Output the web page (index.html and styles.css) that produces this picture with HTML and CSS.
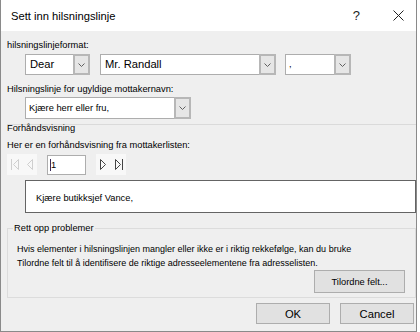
FILE: index.html
```html
<!DOCTYPE html>
<html lang="nb">
<head>
  <meta charset="UTF-8" />
  <title>Sett inn hilsningslinje</title>
  <link rel="stylesheet" href="styles.css">
</head>
<body>
  <div class="dialog">
    <div class="titlebar">
      <span class="title">Sett inn hilsningslinje</span>
      <span class="help">?</span>
      <span class="close">
        <svg width="11" height="11" viewBox="0 0 11 11"><path d="M0.5 0.5 L10.5 10.5 M10.5 0.5 L0.5 10.5" stroke="#222" stroke-width="1" fill="none"/></svg>
      </span>
    </div>

    <div class="content">
      <div class="label">hilsningslinjeformat:</div>
      <div class="combo-row">
        <div class="combo big dear">
          <span class="value">Dear</span>
          <span class="drop"><svg width="7" height="4" viewBox="0 0 7 4"><polyline points="0.5,0.5 3.5,3.5 6.5,0.5" fill="none" stroke="#606060"/></svg></span>
        </div>
        <div class="combo big name">
          <span class="value">Mr. Randall</span>
          <span class="drop"><svg width="7" height="4" viewBox="0 0 7 4"><polyline points="0.5,0.5 3.5,3.5 6.5,0.5" fill="none" stroke="#606060"/></svg></span>
        </div>
        <div class="combo punct">
          <span class="value">,</span>
          <span class="drop"><svg width="7" height="4" viewBox="0 0 7 4"><polyline points="0.5,0.5 3.5,3.5 6.5,0.5" fill="none" stroke="#606060"/></svg></span>
        </div>
      </div>

      <div class="label label-2">Hilsningslinje for ugyldige mottakernavn:</div>
      <div class="combo invalid">
        <span class="value">Kjære herr eller fru,</span>
        <span class="drop"><svg width="7" height="4" viewBox="0 0 7 4"><polyline points="0.5,0.5 3.5,3.5 6.5,0.5" fill="none" stroke="#606060"/></svg></span>
      </div>

      <div class="separator">
        <span>Forhåndsvisning</span>
      </div>

      <div class="label label-3">Her er en forhåndsvisning fra mottakerlisten:</div>
      <div class="nav-row">
        <div class="nav-group">
          <span class="nav-btn">
            <svg width="8" height="11" viewBox="0 0 8 11"><path d="M0.5 0 V11" stroke="#cfcfcf"/><polygon points="7.5,0.5 7.5,10.5 2.5,5.5" fill="none" stroke="#cfcfcf"/></svg>
          </span>
          <span class="nav-btn">
            <svg width="7" height="11" viewBox="0 0 7 11"><polygon points="6.5,0.5 6.5,10.5 1.5,5.5" fill="none" stroke="#cfcfcf"/></svg>
          </span>
        </div>
        <div class="record"><span class="caret"></span>1</div>
        <div class="nav-group">
          <span class="nav-btn">
            <svg width="7" height="11" viewBox="0 0 7 11"><polygon points="0.5,0.5 0.5,10.5 5.5,5.5" fill="none" stroke="#444"/></svg>
          </span>
          <span class="nav-btn">
            <svg width="8" height="11" viewBox="0 0 8 11"><polygon points="0.5,0.5 0.5,10.5 5.5,5.5" fill="none" stroke="#444"/><path d="M7.5 0 V11" stroke="#444"/></svg>
          </span>
        </div>
      </div>

      <div class="preview">Kjære butikksjef Vance,</div>

      <div class="group">
        <span class="group-title">Rett opp problemer</span>
        <p class="hint">Hvis elementer i hilsningslinjen mangler eller ikke er i riktig rekkefølge, kan du bruke<br>Tilordne felt til å identifisere de riktige adresseelementene fra adresselisten.</p>
        <div class="group-actions">
          <button class="btn match">Tilordne felt...</button>
        </div>
      </div>

      <div class="buttons">
        <button class="btn">OK</button>
        <button class="btn">Cancel</button>
      </div>
    </div>
  </div>
</body>
</html>
```

FILE: styles.css
```css
body {
  margin: 0;
  background: #fff;
  font-family: "Liberation Sans", Arial, sans-serif;
  color: #000;
}

.dialog {
  width: 417px;
  height: 332px;
  box-sizing: border-box;
  border: 1px solid #8a8a8a;
  border-top: none;
  background: #efefef;
}

.titlebar {
  height: 31px;
  background: #fff;
  display: flex;
  align-items: center;
  padding: 0 12px 0 10px;
}

.title {
  font-size: 11.2px;
}

.help {
  margin-left: auto;
  margin-right: 33px;
  font-size: 13px;
  color: #222;
}

.close {
  display: flex;
}

.content {
  padding: 0 0 0 6px;
}

.label {
  font-size: 9.3px;
  line-height: 14px;
  margin-top: 7px;
}

.label-2 {
  margin-top: 7px;
}

.label-3 {
  margin-top: 4px;
}

.combo-row {
  display: flex;
  margin: 2px 0 0 18px;
}

.combo {
  display: flex;
  height: 21px;
  box-sizing: border-box;
  border: 1px solid #adadad;
  background: #fff;
}

.combo .value {
  flex: 1;
  font-size: 9.3px;
  line-height: 19px;
  padding-left: 3px;
  white-space: nowrap;
  overflow: hidden;
}

.combo.big .value {
  font-size: 11.2px;
  padding-left: 4px;
}

.drop {
  width: 17px;
  margin: -1px -1px -1px 0;
  box-sizing: border-box;
  border: 2px solid #b7b7b7;
  background: #e6e6e6;
  display: flex;
  align-items: center;
  justify-content: center;
}

.dear {
  width: 65px;
}

.name {
  width: 176px;
  margin-left: 10px;
}

.punct {
  width: 66px;
  margin-left: 9px;
}

.invalid {
  width: 166px;
  height: 22px;
  margin: 1px 0 0 18px;
}

.invalid .value {
  line-height: 20px;
}

.separator {
  margin-top: 5px;
  border-top: 1px solid #dadada;
}

.separator span {
  display: block;
  margin-top: -3px;
  font-size: 9.3px;
  line-height: 12px;
}

.nav-row {
  display: flex;
  margin-top: 2px;
  height: 21px;
}

.nav-group {
  display: flex;
  background: #f8f8f8;
  width: 30px;
}

.nav-btn {
  flex: 1;
  display: flex;
  align-items: center;
  justify-content: center;
}

.record {
  width: 39px;
  height: 20px;
  box-sizing: border-box;
  margin: 1px 10px 0 10px;
  border: 1px solid #adadad;
  background: #fff;
  font-size: 9.3px;
  line-height: 18px;
  padding-left: 2px;
  display: flex;
  align-items: center;
}

.caret {
  width: 1px;
  height: 12px;
  background: #3a2a5a;
}

.preview {
  margin: 5px 0 0 18px;
  height: 33px;
  box-sizing: border-box;
  border: 1px solid #646464;
  background: #fff;
  font-size: 9.3px;
  padding: 12px 0 0 10px;
}

.group {
  margin-top: 15px;
  height: 70px;
  box-sizing: border-box;
  border: 1px solid #dcdcdc;
}

.group-title {
  display: block;
  width: max-content;
  margin: -7px 0 0 5px;
  padding: 0 1px;
  background: #efefef;
  font-size: 9.3px;
  line-height: 12px;
}

.hint {
  margin: 8px 0 0 9px;
  font-size: 9px;
  line-height: 14px;
  white-space: nowrap;
}

.group-actions {
  display: flex;
  justify-content: flex-end;
  margin-right: 10px;
}

.btn {
  font-family: inherit;
  font-size: 11.2px;
  height: 21px;
  width: 74px;
  padding: 0;
  border: 1px solid #adadad;
  background: #e1e1e1;
  color: #000;
}

.btn.match {
  width: 91px;
  height: 23px;
  font-size: 9.3px;
}

.buttons {
  display: flex;
  justify-content: flex-end;
  gap: 10px;
  margin: 5px 2px 0 0;
}
```
